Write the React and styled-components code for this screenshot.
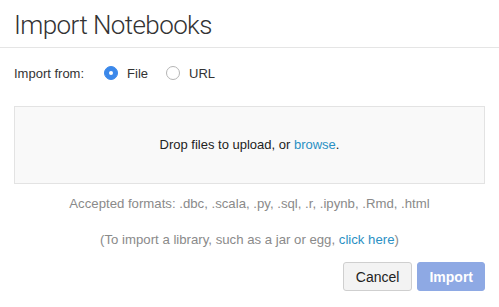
import React, { useState } from "react";
import styled, { createGlobalStyle } from "styled-components";

const Global = createGlobalStyle`
  html, body { margin: 0; padding: 0; background: #fff; }
  body { font-family: "Liberation Sans", Arial, sans-serif; color: #333; }
  * { box-sizing: border-box; }
`;

const Dialog = styled.div`
  width: 499px;
  height: 307px;
  background: #fff;
  display: flex;
  flex-direction: column;
`;

const Header = styled.div`
  height: 48px;
  border-bottom: 1px solid #e5e5e5;
  padding: 0 14px;
  display: flex;
  align-items: center;
`;

const Title = styled.h1`
  margin: 0;
  font-family: Roboto, "Liberation Sans", sans-serif;
  font-weight: 300;
  font-size: 26px;
  color: #333;
  letter-spacing: -0.6px;
  position: relative;
  top: 1px;
`;

const Body = styled.div`
  padding: 0 14px;
  display: flex;
  flex-direction: column;
`;

const SourceRow = styled.div`
  height: 50px;
  display: flex;
  align-items: center;
  font-size: 13px;
`;

const Label = styled.span`
  margin-right: 20px;
`;

const RadioOption = styled.label`
  display: flex;
  align-items: center;
  margin-right: 18px;
  cursor: pointer;
`;

const RadioCircle = styled.span`
  width: 14px;
  height: 14px;
  border-radius: 50%;
  margin-right: 9px;
  display: flex;
  align-items: center;
  justify-content: center;
  background: ${(p) => (p.$on ? "#3b88ea" : "#fff")};
  border: 1px solid ${(p) => (p.$on ? "#3b88ea" : "#b5b5b5")};
  &::after {
    content: "";
    width: 4px;
    height: 4px;
    border-radius: 50%;
    background: #fff;
    display: ${(p) => (p.$on ? "block" : "none")};
  }
`;

const DropZone = styled.div`
  margin-top: 8px;
  height: 78px;
  background: #f9f9f9;
  border: 1px solid #e3e3e3;
  display: flex;
  align-items: center;
  justify-content: center;
  font-size: 13px;
  color: #222;
  padding-bottom: 2px;
`;

const Link = styled.a`
  color: #2a90c4;
  text-decoration: none;
  cursor: pointer;
`;

const Note = styled.p`
  margin: 0;
  text-align: center;
  font-size: 13.2px;
  color: #8a8a8a;
  height: ${(p) => p.$h}px;
  display: flex;
  align-items: center;
  justify-content: center;
`;

const Footer = styled.div`
  display: flex;
  justify-content: flex-end;
  gap: 5px;
  margin-top: 6px;
`;

const Button = styled.button`
  height: 29px;
  padding: 0 ${(p) => p.$px}px;
  border-radius: 3px;
  font-family: "Liberation Sans", Arial, sans-serif;
  font-size: 14px;
  border: 1px solid ${(p) => (p.$primary ? "#8ea9e4" : "#cfcfcf")};
  background: ${(p) => (p.$primary ? "#8ea9e4" : "#f3f3f3")};
  color: ${(p) => (p.$primary ? "#fff" : "#222")};
  font-weight: ${(p) => (p.$primary ? 700 : 400)};
  cursor: pointer;
`;

export default function App() {
  const [src, setSrc] = useState("file");
  return (
    <>
      <Global />
      <Dialog>
        <Header>
          <Title>Import Notebooks</Title>
        </Header>
        <Body>
          <SourceRow>
            <Label>Import from:</Label>
            <RadioOption onClick={() => setSrc("file")}>
              <RadioCircle $on={src === "file"} />
              File
            </RadioOption>
            <RadioOption onClick={() => setSrc("url")}>
              <RadioCircle $on={src === "url"} />
              URL
            </RadioOption>
          </SourceRow>
          <DropZone>
            <span>
              Drop files to upload, or <Link>browse</Link>.
            </span>
          </DropZone>
          <Note $h={38}>Accepted formats: .dbc, .scala, .py, .sql, .r, .ipynb, .Rmd, .html</Note>
          <Note $h={34}>
            <span>
              (To import a library, such as a jar or egg, <Link>click here</Link>)
            </span>
          </Note>
          <Footer>
            <Button $px={12}>Cancel</Button>
            <Button $primary $px={11}>Import</Button>
          </Footer>
        </Body>
      </Dialog>
    </>
  );
}
